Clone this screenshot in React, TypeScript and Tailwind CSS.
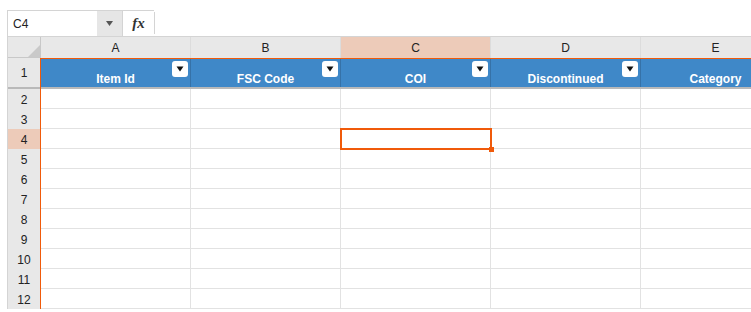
import React from "react";

const columns = [
  { letter: "A", title: "Item Id" },
  { letter: "B", title: "FSC Code" },
  { letter: "C", title: "COI" },
  { letter: "D", title: "Discontinued" },
  { letter: "E", title: "Category" },
];

const rows = [2, 3, 4, 5, 6, 7, 8, 9, 10, 11, 12];

function FilterButton() {
  return (
    <div className="absolute right-[2px] top-[2px] flex h-[16px] w-[16px] items-center justify-center rounded-[3px] bg-white">
      <svg width="8" height="6" viewBox="0 0 8 6">
        <path d="M0.5 0.5 H7.5 L4 5.5 Z" fill="#111" />
      </svg>
    </div>
  );
}

export default function App() {
  return (
    <div
      className="h-[312px] w-[751px] overflow-hidden bg-white pl-[7px] pt-[10px] text-[12px] text-[#222]"
      style={{ fontFamily: '"Liberation Sans", Arial, sans-serif' }}
    >
      {/* Formula bar */}
      <div className="flex h-[26px]">
        <div className="flex w-[90px] items-center border-l border-t border-[#d4d4d4] bg-white pl-[5px] text-[12px] text-[#222]">
          C4
        </div>
        <div className="flex w-[26px] items-center justify-center border-t border-r border-[#d4d4d4] bg-[#e6e6e6]">
          <svg width="7" height="5" viewBox="0 0 7 5">
            <path d="M0 0 H7 L3.5 5 Z" fill="#555" />
          </svg>
        </div>
        <div className="flex w-[31px] items-center justify-center border-t border-[#d4d4d4] bg-white">
          <span
            className="text-[15px] font-bold italic text-[#333]"
            style={{ fontFamily: '"Liberation Serif", "Times New Roman", serif' }}
          >
            fx
          </span>
        </div>
        <div className="my-[2px] w-px bg-[#d4d4d4]" />
        <div className="flex-1 bg-white" />
      </div>

      {/* Grid */}
      <div className="border-l border-[#d4d4d4]">
        {/* Column letters */}
        <div className="flex h-[22px] border-t border-[#d4d4d4] bg-[#e8e8e8]">
          <div className="relative w-[33px] shrink-0 border-b border-r border-[#c8c8c8]">
            <svg className="absolute bottom-0 right-0" width="12" height="12" viewBox="0 0 12 12">
              <path d="M12 0 V12 H0 Z" fill="#c9c9c9" />
            </svg>
          </div>
          {columns.map((c) => (
            <div
              key={c.letter}
              className={`flex w-[150px] shrink-0 items-center justify-center border-r border-[#dcdcdc] ${
                c.letter === "C" ? "bg-[#edcbb9]" : ""
              }`}
            >
              {c.letter}
            </div>
          ))}
        </div>

        {/* Header row 1 */}
        <div className="flex h-[31px]">
          <div className="flex w-[32px] shrink-0 items-center justify-center border-b-2 border-[#b9b9b9] bg-[#e8e8e8]">
            1
          </div>
          <div className="w-px shrink-0 bg-[#f05a0a]" />
          <div className="flex border-b-2 border-t border-b-[#b9b9b9] border-t-[#f05a0a] bg-[#3f88c8]">
            {columns.map((c) => (
              <div
                key={c.letter}
                className="relative flex w-[150px] shrink-0 items-end justify-center border-r border-[#3672a8] pb-[1px] font-bold leading-[14px] text-white"
              >
                {c.title}
                <FilterButton />
              </div>
            ))}
          </div>
        </div>

        {/* Data rows */}
        {rows.map((r) => (
          <div key={r} className="flex h-[20px]">
            <div
              className={`flex w-[32px] shrink-0 items-center justify-center pt-px ${
                r === 4 ? "bg-[#edcbb9]" : "bg-[#e8e8e8]"
              }`}
            >
              {r}
            </div>
            <div className="w-px shrink-0 bg-[#f05a0a]" />
            {columns.map((c) => (
              <div
                key={c.letter}
                className="relative w-[150px] shrink-0 border-b border-r border-[#e2e2e2]"
              >
                {r === 4 && c.letter === "C" && (
                  <div className="absolute left-[-1px] top-[-1px] z-10 h-[22px] w-[152px] border-2 border-[#f05a0a]">
                    <div className="absolute bottom-[-4px] right-[-4px] h-[5px] w-[5px] bg-[#f05a0a]" />
                  </div>
                )}
              </div>
            ))}
          </div>
        ))}
      </div>
    </div>
  );
}
